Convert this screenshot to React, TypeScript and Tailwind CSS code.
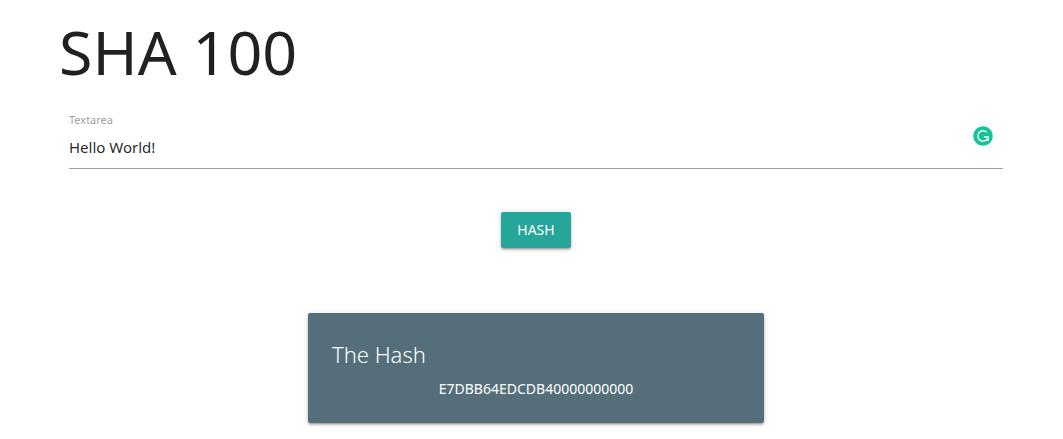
import { useState } from "react";

const shadow =
  "shadow-[0_2px_2px_0_rgba(0,0,0,0.14),0_3px_1px_-2px_rgba(0,0,0,0.12),0_1px_5px_0_rgba(0,0,0,0.2)]";

function AssistantBadge() {
  return (
    <svg viewBox="0 0 20 20" className="size-5" aria-hidden="true">
      <circle cx="10" cy="10" r="9.8" fill="#15c39a" />
      <path
        d="M13.6 6.2A5.2 5.2 0 1 0 14.4 12.8"
        fill="none"
        stroke="#fff"
        strokeWidth="1.4"
      />
      <path d="M11 11H15.2V15" fill="none" stroke="#fff" strokeWidth="1.4" />
    </svg>
  );
}

export default function App() {
  const [text, setText] = useState("Hello World!");

  return (
    <main className="min-h-screen bg-white pr-12 pl-[57px] font-['Noto_Sans','Open_Sans',sans-serif] text-black/87">
      <h1 className="pt-3 pl-0.5 text-[61px] leading-20 font-normal">SHA 100</h1>
      <form className="px-3 pt-5" onSubmit={(e) => e.preventDefault()}>
        <div className="relative border-b border-[#9e9e9e]">
          <label htmlFor="source" className="block text-[11px] leading-4 text-[#9e9e9e]">
            Textarea
          </label>
          <textarea
            id="source"
            rows={1}
            value={text}
            onChange={(e) => setText(e.target.value)}
            className="block h-10 w-full resize-none overflow-hidden bg-transparent pt-[7px] text-[15px] leading-6 outline-none"
          />
          <span className="absolute top-3.5 right-2.5">
            <AssistantBadge />
          </span>
        </div>
        <div className="flex justify-center pt-[43px]">
          <button
            type="submit"
            className={`h-9 rounded-xs bg-[#26a69a] px-4 text-[14px] leading-9 text-white ${shadow}`}
          >
            HASH
          </button>
        </div>
      </form>
      <div className="flex justify-center pt-[65px]">
        <section className={`w-[calc(50%-23px)] rounded-xs bg-[#546e7a] px-6 pt-6 pb-5 text-white ${shadow}`}>
          <h2 className="text-[22px] leading-[34px] font-light">The Hash</h2>
          <p className="pt-1 text-center text-[14px] leading-7">E7DBB64EDCDB40000000000</p>
        </section>
      </div>
    </main>
  );
}
